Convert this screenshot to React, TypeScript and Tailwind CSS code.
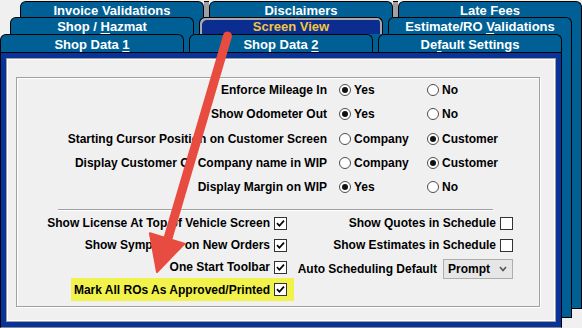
import React from "react";

type TabDef = { label: React.ReactNode; selected?: boolean };

const U = ({ children }: { children: React.ReactNode }) => (
  <span className="underline decoration-1 underline-offset-[2px]">{children}</span>
);

function Tab({ children, selected = false, grow = false }: { children: React.ReactNode; selected?: boolean; grow?: boolean }) {
  return (
    <div
      className={`flex items-center justify-center rounded-t-[6px] border border-b-0 border-black pt-[1px] text-[13px] font-bold leading-none ${
        grow ? "flex-1" : "w-[184px] shrink-0"
      } ${
        selected
          ? "bg-[#0b2d8f] text-[#f3c63d] shadow-[inset_2px_2px_0_#a9a9a9,inset_-2px_0_0_#a9a9a9]"
          : "bg-[#006096] text-white"
      }`}
    >
      <span className="whitespace-pre">{children}</span>
    </div>
  );
}

function Card({
  frame,
  rowHeight,
  gap,
  tabs,
  bodyClass,
  children,
}: {
  frame: string;
  rowHeight: string;
  gap: string;
  tabs: TabDef[];
  bodyClass: string;
  children?: React.ReactNode;
}) {
  return (
    <div className={`col-start-1 row-start-1 flex w-[562px] flex-col ${frame}`}>
      <div className={`flex shrink-0 ${rowHeight}`}>
        {tabs.map((t, i) => (
          <React.Fragment key={i}>
            {i > 0 && <div className={`w-[5px] shrink-0 ${gap}`} />}
            <Tab selected={t.selected} grow={i === tabs.length - 1}>
              {t.label}
            </Tab>
          </React.Fragment>
        ))}
      </div>
      <div className={`min-h-0 flex-1 ${bodyClass}`}>{children}</div>
    </div>
  );
}

const Radio = ({ checked }: { checked?: boolean }) => (
  <span className="flex h-[12px] w-[12px] shrink-0 items-center justify-center rounded-full border border-[#4d4d4d] bg-white">
    {checked && <span className="h-[6px] w-[6px] rounded-full bg-[#111111]" />}
  </span>
);

const Check = ({ checked }: { checked?: boolean }) => (
  <span className="flex h-[13px] w-[13px] shrink-0 items-center justify-center border border-[#333333] bg-white">
    {checked && (
      <svg viewBox="0 0 9 9" className="h-[9px] w-[9px]">
        <path d="M1 4.2 L3.4 6.8 L8 1.6" stroke="#000" strokeWidth="1.7" fill="none" />
      </svg>
    )}
  </span>
);

const radioRows: [string, string, string, number][] = [
  ["Enforce Mileage In", "Yes", "No", 0],
  ["Show Odometer Out", "Yes", "No", 0],
  ["Starting Cursor Position on Customer Screen", "Company", "Customer", 1],
  ["Display Customer Or Company name in WIP", "Company", "Customer", 1],
  ["Display Margin on WIP", "Yes", "No", 0],
];

function CheckRow({ label, checked }: { label: string; checked?: boolean }) {
  return (
    <div className="flex h-[22px] items-center gap-[4px] pr-[7px]">
      <span>{label}</span>
      <Check checked={checked} />
    </div>
  );
}

export default function App() {
  return (
    <div className="relative h-[328px] w-[582px] overflow-hidden bg-[#f0f0f0] font-['Liberation_Sans',Arial,sans-serif] text-black">
      <div className="grid h-[328px] w-[582px] items-start justify-items-start">
        <Card
          frame="ml-[20px] mt-[1px] h-[308px]"
          rowHeight="h-[16px]"
          gap="border-t border-black bg-[#a0a0a0]"
          bodyClass="border-x border-b border-black bg-[#006096]"
          tabs={[
            { label: <><U>I</U>nvoice Validations</> },
            { label: <>Dis<U>c</U>laimers</> },
            { label: <><U>L</U>ate Fees</> },
          ]}
        />
        <Card
          frame="ml-[10px] mt-[17px] h-[301px]"
          rowHeight="h-[17px]"
          gap=""
          bodyClass="border-x border-b border-black bg-[#006096]"
          tabs={[
            { label: <>Shop / <U>H</U>azmat</> },
            { label: <>Screen View</>, selected: true },
            { label: <>Estimate/RO <U>V</U>alidations</> },
          ]}
        />
        <Card
          frame="ml-0 mt-[34px] h-[294px]"
          rowHeight="h-[18px]"
          gap=""
          bodyClass="border border-black border-b-[#8c8c8c] bg-[#0a3399] p-[5px]"
          tabs={[
            { label: <>Shop Data <U>1</U></> },
            { label: <>Shop Data <U>2</U></> },
            { label: <>De<U>f</U>ault Settings</> },
          ]}
        >
          <div className="h-full border border-[#a0a0a0] bg-[#f0f0f0] pl-[9px] pt-[18px] text-[12px] font-bold leading-none shadow-[inset_0_0_0_1px_#ffffff]">
            <div className="h-[230px] w-[524px] border border-[#a0a0a0] shadow-[1px_1px_0_#ffffff,inset_1px_1px_0_#ffffff]">
              <div className="grid auto-rows-[24.25px] grid-cols-[310px_100px_auto]">
                {radioRows.map(([label, a, b, sel]) => (
                  <React.Fragment key={label}>
                    <div className="flex items-center justify-end">{label}</div>
                    <div className="flex items-center gap-[3px] pl-[12px]">
                      <Radio checked={sel === 0} />
                      <span>{a}</span>
                    </div>
                    <div className="flex items-center gap-[3px]">
                      <Radio checked={sel === 1} />
                      <span>{b}</span>
                    </div>
                  </React.Fragment>
                ))}
              </div>

              <div className="ml-[41px] mt-[10px] h-[2px] w-[435px] border-t border-[#a0a0a0] bg-white" />

              <div className="mt-[1px] flex">
                <div className="flex w-[277px] flex-col items-end">
                  <CheckRow label="Show License At Top of Vehicle Screen" checked />
                  <CheckRow label="Show Symptoms on New Orders" checked />
                  <CheckRow label="One Start Toolbar" checked />
                  <div className="flex h-[23px] items-center gap-[4px] bg-[#f2f24c] pl-[3px] pr-[7px]">
                    <span>Mark All ROs As Approved/Printed</span>
                    <Check checked />
                  </div>
                </div>
                <div className="flex w-[219px] flex-col items-end">
                  <div className="flex h-[22px] items-center gap-[4px]">
                    <span>Show Quotes in Schedule</span>
                    <Check />
                  </div>
                  <div className="flex h-[22px] items-center gap-[4px]">
                    <span>Show Estimates in Schedule</span>
                    <Check />
                  </div>
                  <div className="mt-[3px] flex h-[20px] items-center gap-[6px]">
                    <span>Auto Scheduling Default</span>
                    <div className="flex h-[20px] w-[70px] items-center justify-between border border-[#adadad] bg-[#e6e6e6] pl-[4px] pr-[5px]">
                      <span>Prompt</span>
                      <svg viewBox="0 0 8 6" className="h-[6px] w-[8px]">
                        <path d="M1 1 L4 4.5 L7 1" stroke="#555" strokeWidth="1.6" fill="none" />
                      </svg>
                    </div>
                  </div>
                </div>
              </div>
            </div>
          </div>
        </Card>
      </div>

      <svg className="pointer-events-none absolute inset-0" width="582" height="328" viewBox="0 0 582 328">
        <line x1="227.5" y1="36" x2="167.5" y2="240" stroke="#e84b3f" strokeWidth="9" strokeLinecap="round" />
        <polygon points="157,272 184.3,243.7 149.9,233.3" fill="#e84b3f" stroke="#e84b3f" strokeWidth="2" strokeLinejoin="round" />
      </svg>
    </div>
  );
}
